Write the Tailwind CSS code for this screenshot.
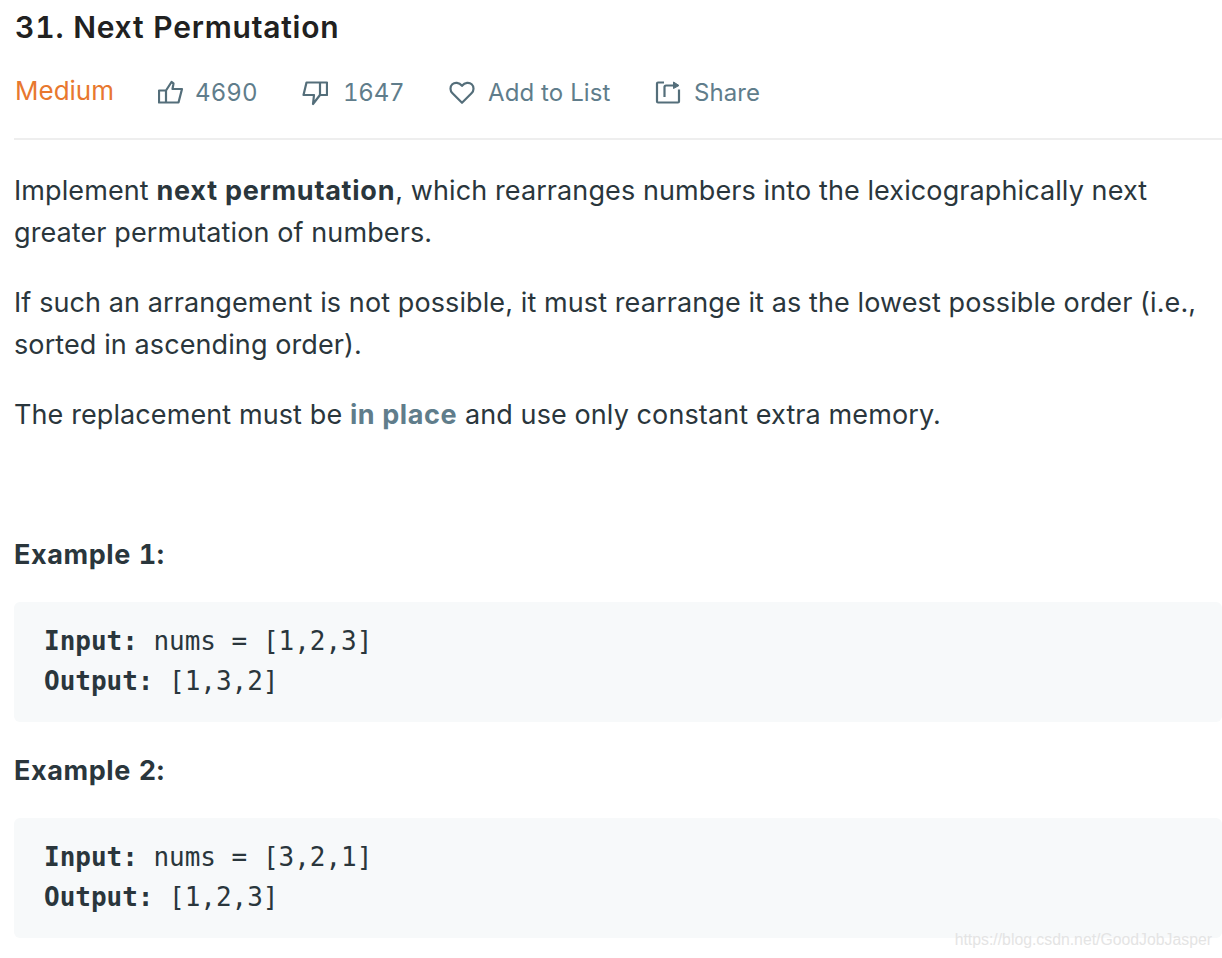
<!DOCTYPE html>
<html lang="en">
<head>
    <meta charset="UTF-8">
    <script src="https://cdn.jsdelivr.net/npm/@tailwindcss/browser@4"></script>
    <title>31. Next Permutation</title>
</head>
<body class="bg-white font-['Inter',sans-serif] overflow-hidden">
    <div class="relative h-[958px] pl-[14px] text-[27px] leading-[42px] tracking-[0.1px] text-[#2a363c]">
        <h1 class="h-[54px] pl-px text-[30px] leading-[54px] font-semibold tracking-[0.8px] tabular-nums text-[#212121]">31. Next Permutation</h1>

        <div class="flex items-center h-[86px] pb-[6px] border-b-2 border-[#eeeeee] text-[24px] tracking-[0.1px] text-[#607d8b]">
            <span class="w-[144px] pl-px pb-[4px] text-[26px] tracking-normal text-[#e8782f]">Medium</span>
            <svg class="w-[26px] h-[26px] mr-[11px]" viewBox="0 0 26 26" fill="none" stroke="#546e7a" stroke-width="2.2" stroke-linejoin="round"><path d="M1 10.500h7l5.500-8.500 2 1.500-1 5.500h9.500l-3.500 13.500H1z"/><path d="M8 10.500v12"/></svg>
            <span class="w-[107px] tabular-nums">4690</span>
            <svg class="w-[26px] h-[26px] mr-[15px]" viewBox="0 0 26 26" fill="none" stroke="#546e7a" stroke-width="2.2" stroke-linejoin="round"><path d="M18 15l-7 9 1-9H1.500l3-12.500H25V15z"/><path d="M18 2.500V15"/></svg>
            <span class="w-[106px] tabular-nums tracking-[-0.2px]">1647</span>
            <svg class="w-[26px] h-[26px] mr-[13px]" viewBox="0 0 26 26" fill="none" stroke="#546e7a" stroke-width="2.2" stroke-linejoin="round"><path transform="translate(0 -0.7)" d="M13 23.500 3.500 14C.8 11.300.9 7.300 3.300 5 5.800 2.700 10 2.900 13 6.500 16 2.900 20.200 2.700 22.700 5c2.400 2.300 2.500 6.300-.2 9z"/></svg>
            <span class="w-[167px]">Add to List</span>
            <svg class="w-[26px] h-[26px] mr-[13px]" viewBox="0 0 26 26" fill="none" stroke="#546e7a" stroke-width="2.2" stroke-linejoin="round"><path d="M9 2.500H3a1 1 0 0 0-1 1v18a1 1 0 0 0 1 1h20a1 1 0 0 0 1-1V9.500"/><path d="M9.500 17V7A1.500 1.500 0 0 1 11 5.500h8"/><path d="M18.500 2 24 5.500 18.500 8.500z" fill="#546e7a" stroke-width="1"/></svg>
            <span>Share</span>
        </div>

        <p class="mt-[30px]">Implement <strong class="font-bold tracking-[0.75px]">next permutation</strong>, which rearranges numbers into the lexicographically next greater permutation of numbers.</p>
        <p class="mt-[28px]">If such an arrangement is not possible, it must rearrange it as the lowest possible order (i.e., sorted in ascending order).</p>
        <p class="mt-[28px]">The replacement must be <strong class="font-bold tracking-[0.6px] text-[#607d8b]">in place</strong> and use only constant extra memory.</p>

        <p class="mt-[98px] font-bold tracking-[0.6px] tabular-nums">Example 1:</p>
        <pre class="mt-[26px] h-[120px] rounded-md bg-[#f7f9fa] pl-[30px] pt-[19px] font-['DejaVu_Sans_Mono',monospace] text-[26px] leading-[40px] tracking-[-0.02px]"><strong>Input:</strong> nums = [1,2,3]
<strong>Output:</strong> [1,3,2]</pre>

        <p class="mt-[28px] font-bold tracking-[0.6px] tabular-nums">Example 2:</p>
        <pre class="mt-[26px] h-[120px] rounded-md bg-[#f7f9fa] pl-[30px] pt-[19px] font-['DejaVu_Sans_Mono',monospace] text-[26px] leading-[40px] tracking-[-0.02px]"><strong>Input:</strong> nums = [3,2,1]
<strong>Output:</strong> [1,2,3]</pre>

        <span class="absolute right-[10px] top-[929px] font-['Liberation_Sans',sans-serif] text-[15.8px] leading-[22px] tracking-normal text-[#e4e4e4]">https://blog.csdn.net/GoodJobJasper</span>
    </div>
</body>
</html>
